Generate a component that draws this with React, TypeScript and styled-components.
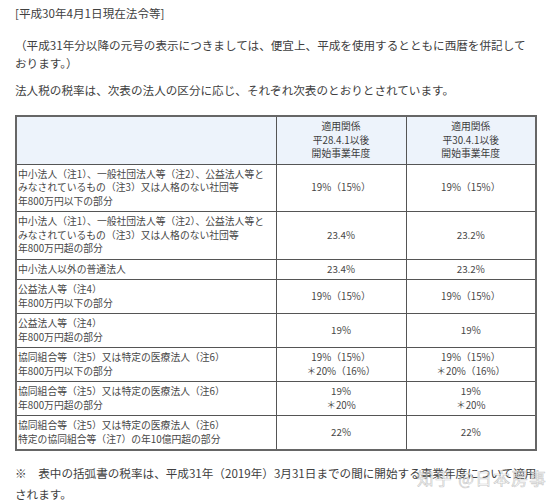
import React from "react";
import styled, { createGlobalStyle } from "styled-components";

const Global = createGlobalStyle`
  html, body { margin: 0; padding: 0; background: #ffffff; }
  body {
    font-family: "Noto Sans CJK JP", "Noto Sans", sans-serif;
    color: #3a3a3a;
  }
`;

const Page = styled.div`
  width: 554px;
  height: 503px;
  box-sizing: border-box;
  padding: 4px 0 0 15px;
  position: relative;
  overflow: hidden;
`;

const Text = styled.p<{ $mt: number; $lh?: number }>`
  margin: ${(p) => p.$mt}px 0 0 0;
  font-size: 11.6px;
  line-height: ${(p) => p.$lh ?? 18}px;
  color: #404040;
  white-space: nowrap;
`;

const Table = styled.table`
  margin-top: 16px;
  width: 520px;
  border-collapse: collapse;
  border: 2px solid #666;
  table-layout: fixed;
  font-size: 9.8px;
  line-height: 13.5px;
  color: #474747;
`;

const HeadCell = styled.th`
  background: #edf3fb;
  border: 1px solid #555;
  font-weight: normal;
  text-align: center;
  padding: 3px 0;
  color: #3c3c3c;
`;

const NameCell = styled.td`
  border: 1px solid #555;
  padding: 3px 2px 3px 1px;
  text-align: left;
  vertical-align: middle;
  white-space: nowrap;
`;

const ValueCell = styled.td`
  border: 1px solid #555;
  padding: 3px 0;
  text-align: center;
  vertical-align: middle;
  white-space: nowrap;
`;

const Line = styled.div``;

const Watermark = styled.div`
  position: absolute;
  left: 417px;
  top: 468px;
  font-size: 16.5px;
  line-height: 20px;
  letter-spacing: 1.5px;
  color: rgba(255, 255, 255, 0.6);
  -webkit-text-stroke: 0.7px rgba(150, 150, 150, 0.5);
  white-space: nowrap;
  pointer-events: none;
`;

type Row = { name: string[]; a: string[]; b: string[] };

const rows: Row[] = [
  {
    name: [
      "中小法人（注1）、一般社団法人等（注2）、公益法人等と",
      "みなされているもの（注3）又は人格のない社団等",
      "年800万円以下の部分",
    ],
    a: ["19%（15%）"],
    b: ["19%（15%）"],
  },
  {
    name: [
      "中小法人（注1）、一般社団法人等（注2）、公益法人等と",
      "みなされているもの（注3）又は人格のない社団等",
      "年800万円超の部分",
    ],
    a: ["23.4%"],
    b: ["23.2%"],
  },
  { name: ["中小法人以外の普通法人"], a: ["23.4%"], b: ["23.2%"] },
  {
    name: ["公益法人等（注4）", "年800万円以下の部分"],
    a: ["19%（15%）"],
    b: ["19%（15%）"],
  },
  {
    name: ["公益法人等（注4）", "年800万円超の部分"],
    a: ["19%"],
    b: ["19%"],
  },
  {
    name: ["協同組合等（注5）又は特定の医療法人（注6）", "年800万円以下の部分"],
    a: ["19%（15%）", "＊20%（16%）"],
    b: ["19%（15%）", "＊20%（16%）"],
  },
  {
    name: ["協同組合等（注5）又は特定の医療法人（注6）", "年800万円超の部分"],
    a: ["19%", "＊20%"],
    b: ["19%", "＊20%"],
  },
  {
    name: [
      "協同組合等（注5）又は特定の医療法人（注6）",
      "特定の協同組合等（注7）の年10億円超の部分",
    ],
    a: ["22%"],
    b: ["22%"],
  },
];

const lines = (arr: string[]) => arr.map((t, i) => <Line key={i}>{t}</Line>);

export default function App() {
  return (
    <>
      <Global />
      <Page>
        <Text $mt={0}>[平成30年4月1日現在法令等]</Text>
        <Text $mt={14}>
          　（平成31年分以降の元号の表示につきましては、便宜上、平成を使用するとともに西暦を併記して
          <br />
          おります。）
        </Text>
        <Text $mt={9}>
          　法人税の税率は、次表の法人の区分に応じ、それぞれ次表のとおりとされています。
        </Text>
        <Table>
          <colgroup>
            <col style={{ width: 260 }} />
            <col style={{ width: 130 }} />
            <col style={{ width: 130 }} />
          </colgroup>
          <thead>
            <tr>
              <HeadCell />
              <HeadCell>{lines(["適用関係", "平28.4.1以後", "開始事業年度"])}</HeadCell>
              <HeadCell>{lines(["適用関係", "平30.4.1以後", "開始事業年度"])}</HeadCell>
            </tr>
          </thead>
          <tbody>
            {rows.map((r, i) => (
              <tr key={i}>
                <NameCell>{lines(r.name)}</NameCell>
                <ValueCell>{lines(r.a)}</ValueCell>
                <ValueCell>{lines(r.b)}</ValueCell>
              </tr>
            ))}
          </tbody>
        </Table>
        <Text $mt={12} $lh={21}>
          ※　表中の括弧書の税率は、平成31年（2019年）3月31日までの間に開始する事業年度について適用
          <br />
          されます。
        </Text>
        <Watermark>知乎 @日本房事</Watermark>
      </Page>
    </>
  );
}
